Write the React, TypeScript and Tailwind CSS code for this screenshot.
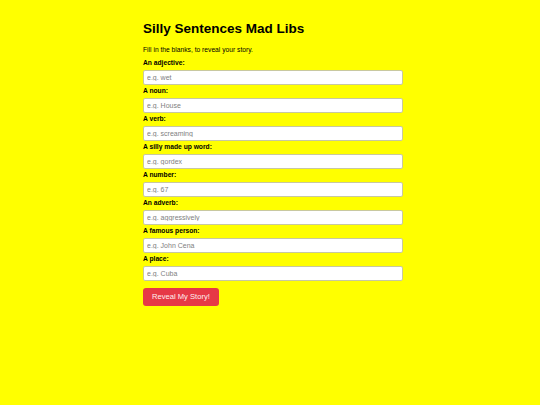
import React from 'react';

const fields = [
  { label: 'An adjective:', placeholder: 'e.g. wet' },
  { label: 'A noun:', placeholder: 'e.g. House' },
  { label: 'A verb:', placeholder: 'e.g. screaming' },
  { label: 'A silly made up word:', placeholder: 'e.g. gordex' },
  { label: 'A number:', placeholder: 'e.g. 67' },
  { label: 'An adverb:', placeholder: 'e.g. aggressively' },
  { label: 'A famous person:', placeholder: 'e.g. John Cena' },
  { label: 'A place:', placeholder: 'e.g. Cuba' },
];

export default function App() {
  return (
    <div className="min-h-[405px] bg-[#ffff00] font-['Liberation_Sans',Arial,sans-serif] text-black">
      <div className="mx-auto w-[266px] pl-[6px] pt-[21px]">
        <h1 className="text-[13.5px] font-bold leading-[16px]">Silly Sentences Mad Libs</h1>
        <p className="mt-[9px] text-[6.7px] leading-[8px]">Fill in the blanks, to reveal your story.</p>
        <form className="mt-[5px] flex flex-col">
          {fields.map((f) => (
            <div key={f.label} className="flex flex-col pb-[2px]">
              <label className="text-[6.7px] font-bold leading-[8px]">{f.label}</label>
              <input
                type="text"
                placeholder={f.placeholder}
                className="mt-[3px] h-[15px] w-full rounded-[2px] border border-[#c8c8a0] bg-white px-[3px] text-[7px] placeholder:text-[#808080] outline-none"
              />
            </div>
          ))}
          <div className="flex pt-[5px]">
            <button
              type="button"
              className="h-[18px] rounded-[3px] bg-[#e63946] px-[9px] text-[7.6px] font-normal leading-[18px] text-[#fff0f0]"
            >
              Reveal My Story!
            </button>
          </div>
        </form>
      </div>
    </div>
  );
}
